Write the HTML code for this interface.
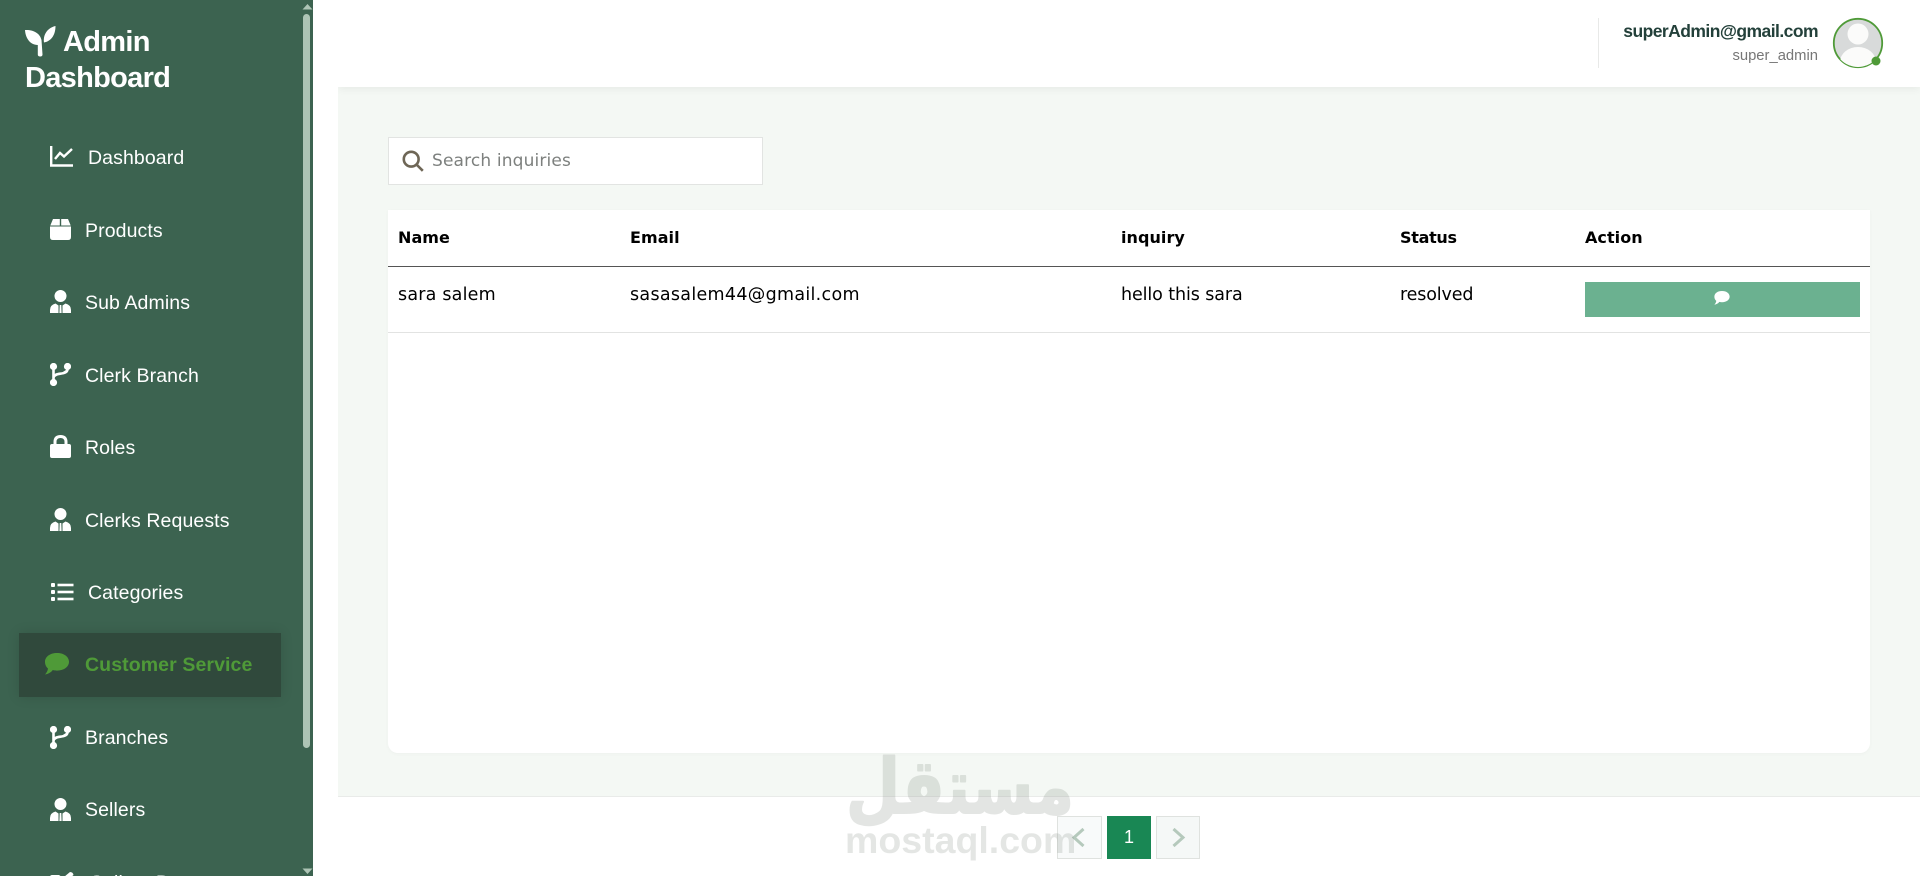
<!DOCTYPE html>
<html><head><meta charset="utf-8"><title>Customer Service</title>
<style>
*{box-sizing:border-box;margin:0;padding:0}
html,body{width:1920px;height:876px;overflow:hidden;background:#fff;font-family:"Liberation Sans",sans-serif}
.a{position:absolute;white-space:nowrap}
#side{position:absolute;left:0;top:0;width:313px;height:876px;background:#3c6350;overflow:hidden}
.n{position:absolute;left:85px;color:#fff;font-size:19.5px;letter-spacing:.1px;line-height:24px;white-space:nowrap}
.i{position:absolute;left:50px;fill:#fff}
.p{font-family:"DejaVu Sans",sans-serif;color:#000;font-size:16px;line-height:22px}
.b{font-weight:bold;letter-spacing:.05px}
.r{font-size:17.5px}
</style></head><body>
<div class="a" style="left:338px;top:87px;width:1582px;height:710px;background:#f4f8f4;border-bottom:1px solid #e9ebe9"></div>
<div class="a" style="left:338px;top:0;width:1582px;height:87px;background:#fff;box-shadow:0 2px 8px rgba(0,0,0,.06);clip-path:inset(0 0 -12px 0)"></div>

<div id="side">
<svg class="i" style="left:25px;top:26px" width="31" height="31" viewBox="0 0 31 31"><path d="M0 4C8 3.500 15 7 16.500 14L17.500 28.500Q17.500 30.500 15.200 30.500Q12.800 30.500 12.800 28.500V19C5 19 .5 12 0 4ZM30.500 0C30.500 8 27 15 19 16.500C18 9 22 2 30.500 0Z"/></svg>
<div class="a" style="left:63px;top:24px;color:#fff;font-size:29px;font-weight:bold;line-height:36px;letter-spacing:-.7px">Admin</div>
<div class="a" style="left:25px;top:60px;color:#fff;font-size:29px;font-weight:bold;line-height:36px;letter-spacing:-.7px">Dashboard</div>

<svg class="i" style="top:146px" width="24" height="21" viewBox="0 0 24 21"><path d="M1.200 0V19.500H23" fill="none" stroke="#fff" stroke-width="2.400"/><path d="M5 13L10 7L14 10.500L22 3" fill="none" stroke="#fff" stroke-width="2.400"/></svg>
<div class="n" style="left:88px;top:146px">Dashboard</div>

<svg class="i" style="top:219px" width="21" height="21" viewBox="0 0 21 21"><path d="M3 0H9.800V6.500H.3ZM11.200 0H18L20.700 6.500H11.200ZM0 7.500H21V18Q21 21 18 21H3Q0 21 0 18Z"/></svg>
<div class="n" style="top:219px">Products</div>

<svg class="i" style="top:290px" width="21" height="23" viewBox="0 0 21 23"><path d="M10.500 0A6 6 0 1 1 10.499 12A6 6 0 0 1 10.500 0ZM5.500 13.500L8.500 15.500V23H0V20Q0 15 5.500 13.500ZM15.500 13.500Q21 15 21 20V23H12.500V15.500ZM9.700 15H11.300L11.600 23H9.400Z"/></svg>
<div class="n" style="top:291px">Sub Admins</div>

<svg class="i" style="top:363px" width="21" height="23" viewBox="0 0 21 23" fill="none" stroke="#fff" stroke-width="2.600"><circle cx="3.500" cy="3.500" r="2.300"/><circle cx="17.500" cy="3.500" r="2.300"/><circle cx="3.500" cy="19.500" r="2.300"/><path d="M3.500 6V17M17.500 6C17.500 13 3.500 8.500 3.500 15"/></svg>
<div class="n" style="top:364px">Clerk Branch</div>

<svg class="i" style="top:435px" width="21" height="23" viewBox="0 0 21 23"><path d="M10.500 0Q17.500 0 17.500 7V9H19Q21 9 21 11V21Q21 23 19 23H2Q0 23 0 21V11Q0 9 2 9H3.500V7Q3.500 0 10.500 0ZM6.500 9H14.500V7Q14.500 3 10.500 3Q6.500 3 6.500 7Z"/></svg>
<div class="n" style="top:436px">Roles</div>

<svg class="i" style="top:508px" width="21" height="23" viewBox="0 0 21 23"><path d="M10.500 0A6 6 0 1 1 10.499 12A6 6 0 0 1 10.500 0ZM5.500 13.500L8.500 15.500V23H0V20Q0 15 5.500 13.500ZM15.500 13.500Q21 15 21 20V23H12.500V15.500ZM9.700 15H11.300L11.600 23H9.400Z"/></svg>
<div class="n" style="top:509px">Clerks Requests</div>

<svg class="i" style="top:582px" width="24" height="20" viewBox="0 0 24 20"><rect x="1" y="1" width="4" height="4" rx="1"/><rect x="1" y="8" width="4" height="4" rx="1"/><rect x="1" y="15" width="4" height="4" rx="1"/><rect x="7.500" y="1.700" width="16" height="2.600"/><rect x="7.500" y="8.700" width="16" height="2.600"/><rect x="7.500" y="15.700" width="16" height="2.600"/></svg>
<div class="n" style="left:88px;top:581px">Categories</div>

<div class="a" style="left:19px;top:633px;width:262px;height:64px;background:#30493c;box-shadow:0 0 12px rgba(0,0,0,.12)"></div>
<svg class="i" style="left:45px;top:653px;fill:#4f9a38" width="24" height="22" viewBox="0 0 24 22"><path d="M12 0C19 0 24 3.800 24 8.800S19 17.600 12 17.600C10.500 17.600 9 17.400 7.800 17C6 19.500 3 21 0 21.500C1.500 20 2.700 17.800 3 15.500C1 14 0 11.500 0 8.800C0 3.800 5 0 12 0Z"/></svg>
<div class="n" style="top:653px;color:#4f9a38;font-weight:bold">Customer Service</div>

<svg class="i" style="top:726px" width="21" height="23" viewBox="0 0 21 23" fill="none" stroke="#fff" stroke-width="2.600"><circle cx="3.500" cy="3.500" r="2.300"/><circle cx="17.500" cy="3.500" r="2.300"/><circle cx="3.500" cy="19.500" r="2.300"/><path d="M3.500 6V17M17.500 6C17.500 13 3.500 8.500 3.500 15"/></svg>
<div class="n" style="top:726px">Branches</div>

<svg class="i" style="top:798px" width="21" height="23" viewBox="0 0 21 23"><path d="M10.500 0A6 6 0 1 1 10.499 12A6 6 0 0 1 10.500 0ZM5.500 13.500L8.500 15.500V23H0V20Q0 15 5.500 13.500ZM15.500 13.500Q21 15 21 20V23H12.500V15.500ZM9.700 15H11.300L11.600 23H9.400Z"/></svg>
<div class="n" style="top:798px">Sellers</div>

<svg class="i" style="top:872px" width="24" height="14" viewBox="0 0 24 14"><path d="M0 5Q0 3 2 3H9L12 5H14L20 0Q23 0 23.500 3L16 9H0Z"/></svg>
<div class="n" style="left:90px;top:871px">Sellers Dues</div>

<div class="a" style="left:303px;top:14px;width:7px;height:734px;border-radius:4px;background:#adc4b5"></div>
<svg class="a" style="left:301px;top:3px" width="12" height="7"><path d="M1.500 6.500L6.500 1L11.500 6.500Z" fill="#adc4b5"/></svg>
<svg class="a" style="left:301px;top:868px" width="12" height="7"><path d="M1.500 .5H11.500L6.500 6Z" fill="#adc4b5"/></svg>
</div>

<div class="a" style="left:1598px;top:18px;width:1px;height:50px;background:#e8e9e8"></div>
<div class="a" style="right:102px;top:20px;font-size:17.500px;line-height:22px;font-weight:bold;color:#23403a;letter-spacing:-.55px">superAdmin@gmail.com</div>
<div class="a" style="right:102px;top:47px;font-size:14.800px;line-height:18px;color:#777">super_admin</div>
<svg class="a" style="left:1832px;top:17px" width="52" height="52" viewBox="0 0 52 52"><defs><clipPath id="c"><circle cx="26" cy="26" r="24"/></clipPath></defs><circle cx="26" cy="26" r="24.200" fill="#d8dada" stroke="#4f9a38" stroke-width="1.800"/><g clip-path="url(#c)" fill="#fbfbfa"><circle cx="26" cy="17" r="10.500"/><ellipse cx="26" cy="45" rx="18" ry="15"/></g><circle cx="44" cy="44" r="4.500" fill="#4f9a38"/></svg>

<div class="a" style="left:388px;top:137px;width:375px;height:48px;background:#fff;border:1px solid #e2e4e2"></div>
<svg class="a" style="left:402px;top:150px" width="22" height="22" viewBox="0 0 22 22" fill="none" stroke="#6e6656" stroke-width="2.600"><circle cx="9.200" cy="9.200" r="7.400"/><path d="M14.500 14.500L20.800 20.800"/></svg>
<div class="a p" style="left:432px;top:150px;color:#7d807e;font-size:17px;letter-spacing:.15px">Search inquiries</div>

<div class="a" style="left:388px;top:210px;width:1482px;height:543px;background:#fff;border-radius:0 0 10px 10px;box-shadow:0 1px 4px rgba(0,0,0,.03)"></div>
<div class="a" style="left:388px;top:266px;width:1482px;height:1px;background:#555"></div>
<div class="a" style="left:388px;top:332px;width:1482px;height:1px;background:#e2e3e2"></div>
<div class="a p b" style="left:398px;top:227px">Name</div>
<div class="a p b" style="left:630px;top:227px">Email</div>
<div class="a p b" style="left:1121px;top:227px">inquiry</div>
<div class="a p b" style="left:1400px;top:227px;letter-spacing:-.3px">Status</div>
<div class="a p b" style="left:1585px;top:227px">Action</div>
<div class="a p r" style="left:398px;top:284px;letter-spacing:.2px">sara salem</div>
<div class="a p r" style="left:630px;top:284px;letter-spacing:.3px">sasasalem44@gmail.com</div>
<div class="a p r" style="left:1121px;top:284px;letter-spacing:-.1px">hello this sara</div>
<div class="a p r" style="left:1400px;top:284px;letter-spacing:-.15px">resolved</div>
<div class="a" style="left:1585px;top:282px;width:275px;height:35px;background:#6bb190"></div>
<svg class="a" style="left:1714px;top:291px;fill:#fff" width="16" height="14" viewBox="0 0 24 22"><path d="M12 0C19 0 24 3.800 24 8.800S19 17.600 12 17.600C10.500 17.600 9 17.400 7.800 17C6 19.500 3 21 0 21.500C1.500 20 2.700 17.800 3 15.500C1 14 0 11.500 0 8.800C0 3.800 5 0 12 0Z"/></svg>

<div class="a" style="left:1057px;top:816px;width:45px;height:43px;border:1px solid #dfe2df;background:rgba(243,247,246,.6)"></div>
<svg class="a" style="left:1071px;top:827px" width="15" height="21" fill="none" stroke="#b5c9bc" stroke-width="3"><path d="M12.500 2L3 10.500L12.500 19"/></svg>
<div class="a" style="left:1107px;top:816px;width:44px;height:43px;background:#198754;color:#fff;font-size:18px;line-height:43px;text-align:center">1</div>
<div class="a" style="left:1156px;top:816px;width:44px;height:43px;border:1px solid #dfe2df;background:#f5f8f7"></div>
<svg class="a" style="left:1171px;top:827px" width="15" height="21" fill="none" stroke="#b5c9bc" stroke-width="3"><path d="M2.500 2L12 10.500L2.500 19"/></svg>

<svg class="a" style="left:840px;top:745px;opacity:.2" width="240" height="90" viewBox="0 0 240 90"><text x="6" y="68" font-family="'DejaVu Sans',sans-serif" font-weight="bold" font-size="76" fill="#788278" stroke="#788278" stroke-width="2" stroke-linejoin="round" textLength="228" lengthAdjust="spacingAndGlyphs">مستقل</text></svg>
<div class="a" style="left:845px;top:817px;font-size:37.5px;line-height:46px;font-weight:bold;color:rgba(120,130,120,.2)">mostaql.com</div>
</body></html>
